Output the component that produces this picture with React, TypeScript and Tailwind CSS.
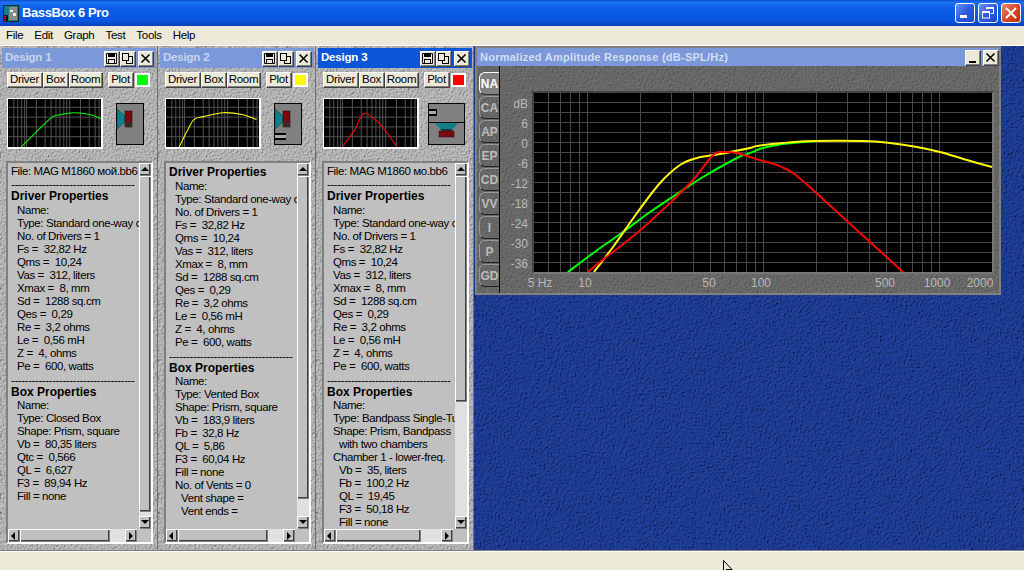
import React from 'react'

const raised = 'bg-[#ece9d8] shadow-[inset_1px_1px_0_#fff,inset_-1px_-1px_0_#808080,1px_1px_0_#404040]'
const barBtn = 'bg-[#c0c0c0] shadow-[inset_1px_1px_0_#fff,inset_-1px_-1px_0_#808080,inset_-2px_-2px_0_#404040]'

// turns "x,y x,y ..." into a smooth path through the same points
function smooth(points: string) {
    const p = points.split(' ').map(s => s.split(',').map(Number))
    let d = `M${p[0][0]} ${p[0][1]}`
    for (let i = 0; i < p.length - 1; i++) {
        const a = p[i - 1] || p[i]
        const b = p[i]
        const c = p[i + 1]
        const e = p[i + 2] || c
        const c1x = b[0] + (c[0] - a[0]) / 6
        const c1y = b[1] + (c[1] - a[1]) / 6
        const c2x = c[0] - (e[0] - b[0]) / 6
        const c2y = c[1] - (e[1] - b[1]) / 6
        d += `C${c1x} ${c1y} ${c2x} ${c2y} ${c[0]} ${c[1]}`
    }
    return d
}

function Texture({ kind }: { kind: 'stone' | 'dark' | 'blue' }) {
    const color = kind === 'stone' ? '#c4c4c4' : kind === 'dark' ? '#727272' : '#2243a0'
    const freq = kind === 'blue' ? '0.55' : '0.75'
    const scale = kind === 'stone' ? '2.2' : kind === 'dark' ? '1.6' : '2.4'
    const id = `tex-${kind}`
    return (
        <svg className="absolute inset-0 h-full w-full" aria-hidden="true">
            <filter id={id} x="0" y="0" width="100%" height="100%">
                <feTurbulence type="fractalNoise" baseFrequency={freq} numOctaves={2} seed={kind === 'blue' ? 4 : 9} />
                <feDiffuseLighting surfaceScale={scale} lightingColor={color} diffuseConstant={1}>
                    <feDistantLight azimuth={225} elevation={55} />
                </feDiffuseLighting>
            </filter>
            <rect width="100%" height="100%" filter={`url(#${id})`} />
        </svg>
    )
}

function AppIcon() {
    return (
        <svg width="16" height="17" viewBox="0 0 16 17" className="shrink-0">
            <rect x="0" y="0" width="16" height="17" fill="#0b2a2a" />
            <rect x="1" y="1" width="14" height="15" fill="#0f7f80" />
            <rect x="6" y="2" width="8" height="13" fill="#8a8a8a" />
            <path d="M7 5h3v2H7zM10 8h3v3h-3z" fill="#e8e8e8" />
            <path d="M1 10h4v6H1z" fill="#111" />
            <path d="M1 11h2v1H1zM1 13h2v1H1zM1 15h2v1H1z" fill="#e02020" />
        </svg>
    )
}

function XpButton({ kind }: { kind: 'min' | 'restore' | 'close' }) {
    const bg = kind === 'close'
        ? 'bg-[linear-gradient(135deg,#e88a6c,#d9492a_50%,#b8330f)]'
        : 'bg-[linear-gradient(135deg,#6c92ee,#2a5be0_50%,#1d48cc)]'
    return (
        <div className={`flex h-[20px] w-[20px] items-center justify-center rounded-[3px] border border-white ${bg}`}>
            <svg width="14" height="14" viewBox="0 0 14 14">
                {kind === 'min' && <rect x="2" y="9" width="7" height="3" fill="#fff" />}
                {kind === 'restore' && (
                    <g fill="none" stroke="#fff">
                        <path d="M5.5 3.5V1.5h7v6h-3" strokeWidth="1" />
                        <path d="M5.5 2h7" strokeWidth="2" />
                        <rect x="1.5" y="5.5" width="7" height="6.5" />
                        <path d="M1.5 6h7" strokeWidth="2" />
                    </g>
                )}
                {kind === 'close' && <path d="M2 2l10 10M12 2L2 12" stroke="#fff" strokeWidth="2" />}
            </svg>
        </div>
    )
}

function TitleButton({ kind }: { kind: 'save' | 'copy' | 'close' | 'min' }) {
    return (
        <div className={`flex h-[15px] w-[15px] items-center justify-center ${raised}`}>
            <svg width="13" height="13" viewBox="0 0 13 13">
                {kind === 'save' && (
                    <g>
                        <path d="M1.5 1.5h10v10h-10z" fill="none" stroke="#000" />
                        <rect x="3" y="1" width="7" height="4" fill="#000" />
                        <rect x="3.5" y="7.5" width="6" height="4" fill="none" stroke="#000" />
                    </g>
                )}
                {kind === 'copy' && (
                    <g fill="none" stroke="#000">
                        <rect x="5.5" y="4.5" width="6" height="7" />
                        <rect x="1.5" y="1.5" width="6" height="7" fill="#ece9d8" />
                    </g>
                )}
                {kind === 'close' && <path d="M2.5 2.5l8 8M10.5 2.5l-8 8" stroke="#000" strokeWidth="1.6" />}
                {kind === 'min' && <rect x="3" y="10" width="7" height="2" fill="#000" />}
            </svg>
        </div>
    )
}

function Arrow({ dir }: { dir: 'up' | 'down' | 'left' | 'right' }) {
    const d = { up: 'M4 1l4 4H0z', down: 'M0 1h8L4 5z', left: 'M5 0v8L1 4z', right: 'M2 0l4 4-4 4z' }[dir]
    return (
        <svg width="8" height="8" viewBox="0 0 8 8" className={dir === 'up' || dir === 'down' ? 'mt-[1px]' : ''}>
            <path d={d} fill="#000" />
        </svg>
    )
}

function Thumbnail({ color, points }: { color: string; points: string }) {
    const ys = [8, 18, 28, 38]
    const xs = [5, 9, 13, 16, 18, 28, 37, 43, 48, 52, 56, 59, 62, 73, 82, 88, 92]
    return (
        <svg width="96" height="51" viewBox="0 0 94 49" className="border border-b-2 border-r-2 border-white bg-black">
            {ys.map(y => <path key={y} d={`M0 ${y + 0.5}H96`} stroke="#555" />)}
            {xs.map(x => <path key={x} d={`M${x + 0.5} 0V51`} stroke="#555" />)}
            <path d={smooth(points)} fill="none" stroke={color} strokeWidth="1.1" />
        </svg>
    )
}

function Cone({ transform }: { transform?: string }) {
    return (
        <g transform={transform}>
            <path d="M1 6l8 7v6l-8 7z" fill="#0f8088" stroke="#06393c" strokeWidth="0.5" />
            <rect x="9" y="8" width="7" height="16" fill="#7a0a10" stroke="#111" strokeWidth="0.6" />
            <rect x="9" y="19" width="7" height="5" fill="#3a2a2a" />
        </g>
    )
}

function BoxIcon({ variant }: { variant: 1 | 2 | 3 }) {
    if (variant === 3) {
        return (
            <svg width="37" height="42" viewBox="0 0 37 42" className="mt-[5px]">
                <rect x="0.5" y="0.5" width="36" height="41" fill="#808080" stroke="#000" />
                <path d="M0 19.5H37" stroke="#000" />
                <rect x="1" y="6" width="8" height="7" fill="#000" />
                <rect x="1" y="8" width="7" height="3" fill="#a8a8a8" />
                <path d="M7 20h23l-7 8h-9z" fill="#0f8088" />
                <path d="M12 26h13l-2 2h-9z" fill="#163c40" />
                <rect x="11" y="28" width="15" height="6" fill="#7a0a10" stroke="#3a0a0a" strokeWidth="0.5" />
            </svg>
        )
    }
    return (
        <svg width="28" height="42" viewBox="0 0 28 42" className="mt-[5px]">
            <rect x="0.5" y="0.5" width="27" height="41" fill="#808080" stroke="#000" />
            <Cone />
            {variant === 2 && (
                <g>
                    <rect x="1" y="30" width="11" height="7" fill="#000" />
                    <rect x="1" y="32" width="11" height="3" fill="#a8a8a8" />
                </g>
            )}
        </svg>
    )
}

function VScroll({ thumb }: { thumb: string }) {
    return (
        <div className="flex w-[12px] shrink-0 flex-col bg-[#e0e0e0]">
            <div className={`flex h-[13px] items-center justify-center ${barBtn}`}><Arrow dir="up" /></div>
            <div className={`${thumb} ${barBtn}`} />
            <div className="flex-1" />
            <div className={`flex h-[13px] items-center justify-center ${barBtn}`}><Arrow dir="down" /></div>
        </div>
    )
}

function HScroll({ thumb }: { thumb: string }) {
    return (
        <div className="flex h-[13px] shrink-0 bg-[#c0c0c0]">
            <div className="flex w-[129px] bg-[#e0e0e0]">
                <div className={`flex w-[12px] items-center justify-center ${barBtn}`}><Arrow dir="left" /></div>
                <div className={`${thumb} ${barBtn}`} />
                <div className="flex-1" />
                <div className={`flex w-[12px] items-center justify-center ${barBtn}`}><Arrow dir="right" /></div>
            </div>
        </div>
    )
}

const DASH = '------------------------------------'

const driverLines = [
    'Name:',
    'Type: Standard one-way driver',
    'No. of Drivers = 1',
    'Fs =  32,82 Hz',
    'Qms =  10,24',
    'Vas =  312, liters',
    'Xmax =  8, mm',
    'Sd =  1288 sq.cm',
    'Qes =  0,29',
    'Re =  3,2 ohms',
    'Le =  0,56 mH',
    'Z =  4, ohms',
    'Pe =  600, watts',
]

type Line = { text: string; indent?: number }

function PropLine({ text, indent = 1 }: Line) {
    return (
        <div className={`h-[13px] whitespace-pre leading-[13px] ${indent === 2 ? 'pl-[12px]' : indent === 1 ? 'pl-[6px]' : ''}`}>{text}</div>
    )
}

function PropList({ file, box, lead }: { file?: string; box: Line[]; lead: string }) {
    return (
        <div className={`min-w-0 flex-1 overflow-hidden pl-[3px] text-[11.5px] tracking-[-0.4px] text-black ${lead}`}>
            {file && <PropLine text={`File: ${file}`} indent={0} />}
            {file && <PropLine text={DASH} indent={0} />}
            <div className="h-[13px] text-[12px] font-bold leading-[11px] tracking-normal">Driver Properties</div>
            {driverLines.map(l => <PropLine key={l} text={l} />)}
            <div className="h-[14px] whitespace-pre leading-[14px]">{DASH}</div>
            <div className="h-[12px] text-[12px] font-bold leading-[11px] tracking-normal">Box Properties</div>
            {box.map(l => <PropLine key={l.text} {...l} />)}
        </div>
    )
}

function DesignPanel(props: {
    n: number
    active?: boolean
    color: string
    swatch: string
    curve: string
    variant: 1 | 2 | 3
    file?: string
    lead: string
    box: Line[]
    vThumb: string
    hThumb: string
}) {
    return (
        <div className="relative h-full w-[158px] shrink-0 border-r border-[#707070]">
            <Texture kind="stone" />
            <div className="relative flex h-full flex-col pl-[2px]">
                <div className={`mt-[2px] flex h-[20px] w-[154px] items-center pl-[3px] pr-[3px] ${props.active ? 'bg-[#0a55d8] text-white' : 'bg-[#7b98d8] text-[#c8d4ee]'}`}>
                    <span className="flex-1 text-[11.5px] font-bold tracking-[-0.2px]">Design {props.n}</span>
                    <TitleButton kind="save" />
                    <div className="w-[1px]" />
                    <TitleButton kind="copy" />
                    <div className="w-[3px]" />
                    <TitleButton kind="close" />
                </div>
                <div className="mt-[4px] flex h-[15px] items-center pl-[5px] text-[11.5px] leading-none tracking-[-0.3px] text-black">
                    <div className={`flex h-[15px] w-[35px] items-center justify-center ${raised}`}>Driver</div>
                    <div className={`ml-[1px] flex h-[15px] w-[25px] items-center justify-center ${raised}`}>Box</div>
                    <div className={`ml-[1px] flex h-[15px] w-[33px] items-center justify-center ${raised}`}>Room</div>
                    <div className={`ml-[6px] flex h-[15px] w-[25px] items-center justify-center ${raised}`}>Plot</div>
                    <div className={`ml-[2px] h-[14px] w-[15px] border-2 border-white ${props.swatch}`} />
                </div>
                <div className="mt-[11px] flex h-[51px] pl-[5px]">
                    <Thumbnail color={props.color} points={props.curve} />
                    <div className={props.variant === 3 ? 'ml-[9px]' : 'ml-[13px]'}>
                        <BoxIcon variant={props.variant} />
                    </div>
                </div>
                <div className="ml-[4px] mt-[12px] flex h-[383px] w-[147px] flex-col border-2 border-b-white border-l-[#808080] border-r-white border-t-[#808080] bg-[#c0c0c0]">
                    <div className="flex min-h-0 flex-1">
                        <PropList file={props.file} box={props.box} lead={props.lead} />
                        <VScroll thumb={props.vThumb} />
                    </div>
                    <HScroll thumb={props.hThumb} />
                </div>
            </div>
        </div>
    )
}

const tabs = ['NA', 'CA', 'AP', 'EP', 'CD', 'VV', 'I', 'P', 'GD']
const dbLabels = ['dB', '6', '0', '-6', '-12', '-18', '-24', '-30', '-36']

const fx = (f: number) => 587.3 + 176 * Math.log10(f / 10)
const freqs = [6, 7, 8, 9, 10, 20, 30, 40, 50, 60, 70, 80, 90, 100, 200, 300, 400, 500, 600, 700, 800, 900, 1000]
const rows = Array.from({ length: 17 }, (_, i) => 102 + i * 10)

const green = '568,272 596,251 623,232 650,212 680,192 703,177 737,158 750,153 763,148 783,144 817,141'
const yellow = '594,272 613,247 637,213 660,183 680,165 697,158 720,154 750,148 757,146 783,143 813,141 863,141 890,143 917,147 940,152 967,160 992,167'
const red = '588,272 600,262 637,233 670,203 693,180 713,155 723,152 737,153 750,157 763,161 777,165 793,173 813,190 847,221 880,251 903,272'

function ResponseGraph() {
    return (
        <div className="h-[183px] w-[462px] border-2 border-b-[#777] border-l-[#444] border-r-[#777] border-t-[#444] bg-black">
            <svg width="458" height="179" viewBox="534 93 458 179" className="block">
                {rows.map(y => <path key={y} d={`M534 ${y + 0.5}H992`} stroke="#484848" />)}
                {freqs.map(f => {
                    const x = Math.round(fx(f)) + 0.5
                    return <path key={f} d={`M${x} 93V272`} stroke="#484848" />
                })}
                <path d={smooth(green)} fill="none" stroke="#00ff00" strokeWidth="2" />
                <path d={smooth(yellow)} fill="none" stroke="#ffff00" strokeWidth="2" />
                <path d={smooth(red)} fill="none" stroke="#ff0000" strokeWidth="2" />
            </svg>
        </div>
    )
}

function ChartWindow() {
    return (
        <div className="ml-[1px] flex h-[249px] w-[526px] flex-col border-2 border-[#808080]">
            <div className="flex h-[18px] shrink-0 items-center bg-[#7b98d8] pl-[3px] pr-[1px]">
                <span className="flex-1 text-[11px] font-bold tracking-[0.25px] text-[#d4def4]">Normalized Amplitude Response (dB-SPL/Hz)</span>
                <TitleButton kind="min" />
                <div className="w-[3px]" />
                <TitleButton kind="close" />
            </div>
            <div className="relative flex min-h-0 flex-1">
                <Texture kind="dark" />
                <div className="relative flex w-[23px] shrink-0 flex-col border-r border-black pl-[2px] pt-[6px]">
                    {tabs.map((t, i) => (
                        <div
                            key={t}
                            className={`flex h-[23px] w-[20px] items-center justify-center rounded-bl-[6px] rounded-tl-[6px] border-b border-l border-t text-[12px] font-bold leading-none ${i === 0 ? 'border-b-[#333] border-l-white border-t-white bg-[#808080] text-white' : 'mt-[1px] border-b-[#222] border-l-[#999] border-t-[#999] text-[#bcbcbc]'}`}
                        >
                            {t}
                        </div>
                    ))}
                </div>
                <div className="relative flex flex-1 flex-col pt-[25px] text-[12px] leading-none text-[#b8b8b8]">
                    <div className="flex">
                        <div className="w-[28px] pt-[3px] text-right">
                            {dbLabels.map(l => <div key={l} className="flex h-[20px] items-center justify-end">{l}</div>)}
                        </div>
                        <div className="ml-[4px]"><ResponseGraph /></div>
                    </div>
                    <div className="mt-[2px] flex h-[14px] items-center text-center">
                        <span className="ml-[24px] w-[32px]">5 Hz</span>
                        <span className="ml-[19px] w-[20px]">10</span>
                        <span className="ml-[104px] w-[20px]">50</span>
                        <span className="ml-[30px] w-[24px]">100</span>
                        <span className="ml-[100px] w-[24px]">500</span>
                        <span className="ml-[25px] w-[30px]">1000</span>
                        <span className="ml-[13px] w-[30px]">2000</span>
                    </div>
                </div>
            </div>
        </div>
    )
}

export default function App() {
    return (
        <div className="relative flex h-[570px] w-[1024px] flex-col overflow-hidden bg-[#ece9d8] font-['Liberation_Sans',Arial,sans-serif]">
            {/* title bar */}
            <div className="flex h-[26px] shrink-0 items-center bg-[linear-gradient(180deg,#0a4fd0_0%,#1a74f4_10%,#0a5ce4_35%,#0856e0_80%,#0a3fb8_100%)] pl-[3px] pr-[3px]">
                <AppIcon />
                <span className="ml-[3px] flex-1 text-[13px] font-bold tracking-[-0.4px] text-white">BassBox 6 Pro</span>
                <div className="flex gap-[3px]">
                    <XpButton kind="min" />
                    <XpButton kind="restore" />
                    <XpButton kind="close" />
                </div>
            </div>

            {/* menu */}
            <div className="flex h-[19px] shrink-0 items-center gap-[11px] pl-[6px] text-[11.5px] tracking-[-0.3px] text-black">
                <span>File</span>
                <span>Edit</span>
                <span>Graph</span>
                <span>Test</span>
                <span>Tools</span>
                <span>Help</span>
            </div>

            <div className="flex min-h-0 flex-1 border-b border-t border-b-[#808080] border-t-white">
                <DesignPanel
                    n={1}
                    color="#00ff00"
                    swatch="bg-[#00ff00]"
                    curve="13,49 27,35 44,19 53,16 67,14 84,16 96,21"
                    variant={1}
                    file="MAG M1860 мой.bb6"
                    lead="pt-[2px]"
                    vThumb="h-[336px]"
                    hThumb="w-[90px]"
                    box={[
                        { text: 'Name:' },
                        { text: 'Type: Closed Box' },
                        { text: 'Shape: Prism, square' },
                        { text: 'Vb =  80,35 liters' },
                        { text: 'Qtc =  0,566' },
                        { text: 'QL =  6,627' },
                        { text: 'F3 =  89,94 Hz' },
                        { text: 'Fill = none' },
                    ]}
                />
                <DesignPanel
                    n={2}
                    color="#ffff00"
                    swatch="bg-[#ffff00]"
                    curve="13,49 21,33 28,21 38,18 58,14 78,16 92,21"
                    variant={2}
                    lead="pt-[4px]"
                    vThumb="h-[323px]"
                    hThumb="w-[90px]"
                    box={[
                        { text: 'Name:' },
                        { text: 'Type: Vented Box' },
                        { text: 'Shape: Prism, square' },
                        { text: 'Vb =  183,9 liters' },
                        { text: 'Fb =  32,8 Hz' },
                        { text: 'QL =  5,86' },
                        { text: 'F3 =  60,04 Hz' },
                        { text: 'Fill = none' },
                        { text: 'No. of Vents = 0' },
                        { text: 'Vent shape =', indent: 2 },
                        { text: 'Vent ends =', indent: 2 },
                    ]}
                />
                <DesignPanel
                    n={3}
                    active
                    color="#ff0000"
                    swatch="bg-[#ff0000]"
                    curve="18,49 30,33 40,15 53,22 65,36 74,49"
                    variant={3}
                    file="MAG M1860 мо.bb6"
                    lead="pt-[2px]"
                    vThumb="h-[226px]"
                    hThumb="w-[85px]"
                    box={[
                        { text: 'Name:' },
                        { text: 'Type: Bandpass Single-Tuned' },
                        { text: 'Shape: Prism, Bandpass' },
                        { text: 'with two chambers', indent: 2 },
                        { text: 'Chamber 1 - lower-freq.' },
                        { text: 'Vb =  35, liters', indent: 2 },
                        { text: 'Fb =  100,2 Hz', indent: 2 },
                        { text: 'QL =  19,45', indent: 2 },
                        { text: 'F3 =  50,18 Hz', indent: 2 },
                        { text: 'Fill = none', indent: 2 },
                    ]}
                />
                <div className="relative min-w-0 flex-1">
                    <Texture kind="blue" />
                    <div className="relative"><ChartWindow /></div>
                </div>
            </div>

            {/* status bar */}
            <div className="h-[19px] shrink-0 border-t border-[#fff] bg-[#ece9d8]" />

            {/* mouse pointer */}
            <svg width="12" height="14" viewBox="0 0 12 14" className="absolute left-[723px] top-[560px]">
                <path d="M0.5 0.5V12L3.5 9.5H9z" fill="#ece9d8" stroke="#000" />
            </svg>
        </div>
    )
}
